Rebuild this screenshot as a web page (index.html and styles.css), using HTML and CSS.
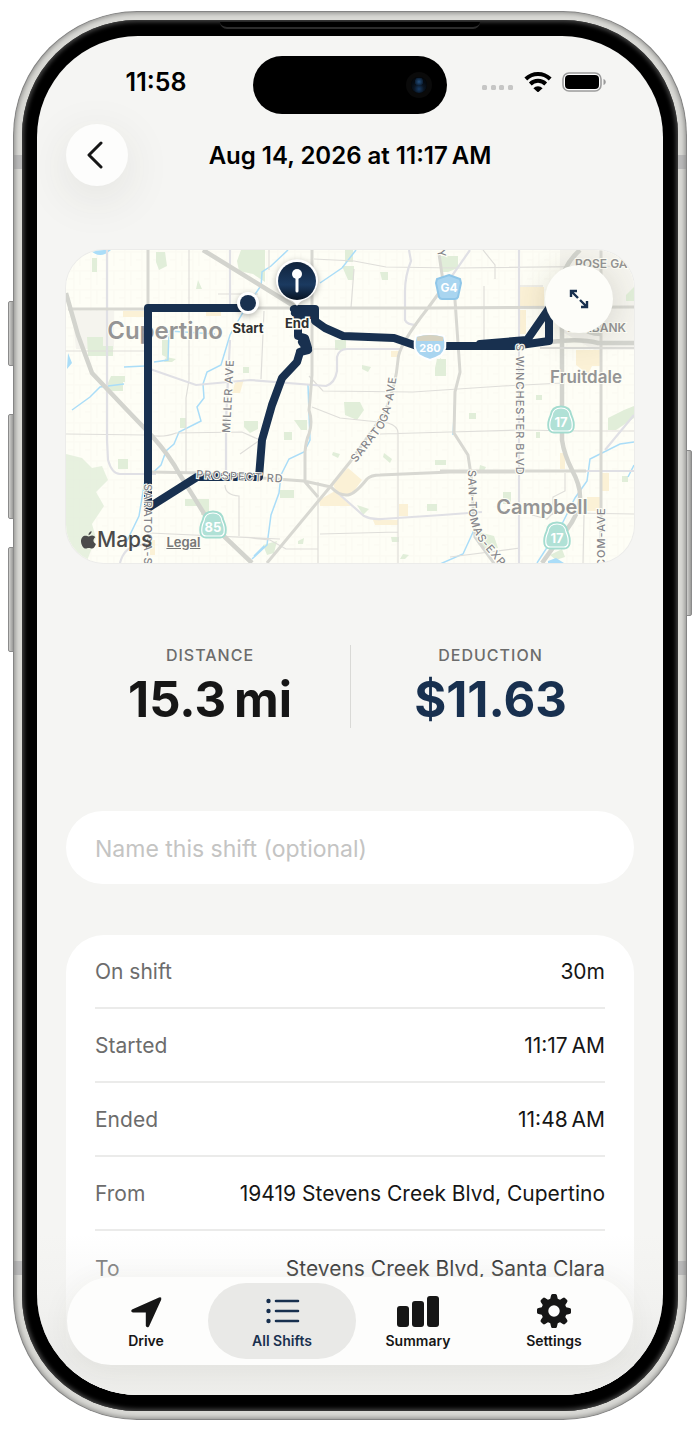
FILE: index.html
```html
<!DOCTYPE html>
<html lang="en">
<head>
  <meta charset="UTF-8">
  <meta name="viewport" content="width=device-width, initial-scale=1">
  <title>Shift details</title>
  <link rel="stylesheet" href="styles.css">
</head>
<body>
  <div class="phone">
    <span class="side-btn action"></span>
    <span class="side-btn vol-up"></span>
    <span class="side-btn vol-down"></span>
    <span class="side-btn power"></span>
    <div class="bezel">
      <div class="screen">

        <div class="status-bar">
          <span class="time">11:58</span>
          <div class="island"><span class="camera"></span></div>
          <div class="status-icons">
            <svg width="32" height="20" viewBox="0 0 32 20" fill="#c6c6c5">
              <rect x="0" y="13" width="5" height="5" rx="1.5"/>
              <rect x="9" y="13" width="5" height="5" rx="1.5"/>
              <rect x="17" y="13" width="5" height="5" rx="1.5"/>
              <rect x="26" y="13" width="5" height="5" rx="1.5"/>
            </svg>
            <svg width="28" height="20" viewBox="0 0 28 20">
              <path d="M1.800 7a17.400 17.400 0 0 1 24.400 0M6.300 12a11 11 0 0 1 15.400 0" fill="none" stroke="#000" stroke-width="4"/>
              <path d="M9.400 16.200a6.600 6.600 0 0 1 9.200 0L14 20.400z"/>
            </svg>
            <svg width="44" height="20" viewBox="0 0 44 20">
              <rect x="1" y="1" width="38" height="18" rx="6" fill="#fff" stroke="#9b9b9b" stroke-width="1.6"/>
              <rect x="3" y="3" width="34" height="14" rx="4"/>
              <path d="M41.500 7c3 1 3 5 0 6z" fill="#9b9b9b"/>
            </svg>
          </div>
        </div>

        <header class="header">
          <button class="back-btn" aria-label="Back">
            <svg width="18" height="28" viewBox="0 0 18 28"><path d="M15 2 3 14l12 12" fill="none" stroke="#161616" stroke-width="3" stroke-linecap="round" stroke-linejoin="round"/></svg>
          </button>
          <h1>Aug 14, 2026 at 11:17&#8239;AM</h1>
        </header>

        <main class="content">
          <section class="map" aria-label="Route map">
            <svg class="map-canvas" viewBox="66 250 568 313">
              <defs>
                <pattern id="streets" width="17" height="19" patternUnits="userSpaceOnUse">
                  <path d="M0 5h17M6 0v19M12 5v14M0 13h6" stroke="#faf9f1" fill="none"/>
                </pattern>
                <linearGradient id="pin" x2="0" y2="1">
                  <stop offset="0" stop-color="#10233c"/>
                  <stop offset=".6" stop-color="#1b3a60"/>
                  <stop offset="1" stop-color="#081423"/>
                </linearGradient>
                <path id="saratoga" d="M356 463L384 427Q393 410 398 366"/>
                <path id="tomas" d="M468 470L469 512Q471 530 482 545L512 580"/>
                <g id="shield">
                  <path d="M0-13Q9-13 10-4Q13 2 12 8Q11 12 7 12H-7Q-11 12-12 8Q-13 2-10-4Q-9-13 0-13Z" fill="#b0e1d6" stroke="#a3dccf" stroke-width="3"/>
                  <path d="M0-12Q8-12 9-4Q12 2 11 8Q10 11 7 11H-7Q-10 11-11 8Q-12 2-9-4Q-8-12 0-12Z" fill="#b0e1d6" stroke="#fff" stroke-width="1.2"/>
                </g>
              </defs>
              <rect x="66" y="250" width="568" height="313" fill="#fefef6"/>
              <rect x="66" y="250" width="568" height="313" fill="url(#streets)"/>

              <!-- built up areas -->
              <path d="M72 311h42v38H76zM560 250h74v100h-40l-35-20z" fill="#f5f4ee"/>
              <!-- parks -->
              <g fill="#e1eed9">
                <path d="M66 454l16 4 10 10 10-2 6 14-12 12 8 14-12 18 4 14-10 25H66z" opacity=".8"/>
                <path d="M241 250h24v32l-12-8-14-3-2-10zM87 337h16v9h10v10H88zM111 376h14v6h-2v9h-15v-8zM118 459h10v10h-10zM156 252h9l2 14-8 4-3-8zM198 280l4 9h-6zM92 258h5v14h-5zM162 340h6v18l-6-3zM180 418h6v10h-6zM185 499h24v16h-8v-9h-16zM244 421h14v8l-8 4-6-6zM345 250h8v12h-8zM342 266h12v14h-6zM380 272h8v8h-6zM335 340h11v10h-11zM362 365l9 2-3 5-6-3zM437 359h9v17h-11v-8zM344 402h16l4 8-7 10-12-5zM294 420h13v10h-6zM284 432h8v8h-8zM280 490h14v8h-14zM333 452l7 2-2 4-6-3zM384 453l8 6-2 4-7-6zM357 505l12 4-6 6zM435 460h11v5h-11zM427 504h10v7h-10zM263 545l14-4-3 12-7 2zM391 537h8v5h-7zM298 541l6-3-1 6h-5zM440 256h18v12l-10 4h-8zM469 413h7v6h-7zM536 432h4v6h-4zM503 492h8v12h-8zM480 465l6 2-2 4h-5zM478 532l16 4 4 12-10 2-10-6zM622 476h6v6h-6zM608 418l16-8 10-4v12l-18 12h-8zM626 295l8-8v14h-8zM440 358l6 4v14h-6zM550 555l12-6 3 8-9 3zM536 395h6v5h-6zM166 357l10 2-4 3h-8zM243 367h6v6h-6zM403 554l6 1-4 4h-5z"/>
              </g>
              <!-- shopping areas -->
              <g fill="#fbf1d6">
                <path d="M123 311h21v6h-21zM206 311h15v5h-15zM235 383l9-4-4 14h-8zM332 482l16-14 14 12-10 14-14 2zM319 500l16-9 9 8 7 7h-31zM399 504h9v12h-9zM373 520h25v5h-23zM519 287h25v19h-25zM519 310h7v24h-7zM576 350h24v16h-8l-4 8-12-9zM587 497h15v14h-15zM560 453h5v16h-5zM602 473h7v18h-7zM150 540h5v15h-5zM391 351h8v6h-8z"/>
              </g>
              <!-- water -->
              <g fill="none" stroke="#aaddf8" stroke-width="1.5">
                <path d="M72 410l18-13 10-10 24-3M124 367l21-1M154 362l14-2 1-29 46 3M260 287l-15 22-15 26-9 30-14 7-4 12 1 14-7 9 4 14-22 11-5 12-8 7-5 14-16 15-6 36-14 29M288 250l-17 16-9 6-1 16M356 250l-14 18-22 15M308 385l2 55-6 12-15 7-8 16-2 18-8 22-4 30-15 14M455 400l-2 35M634 442l-14 2-22 11-8 4-3 22-12 17-14 28-24 37M474 530l-11 24-23 10M634 465l-6 12M254 556l10-10"/>
              </g>
              <path d="M90 250q10 10 21 0zM548 561l8-3 8 5h-16zM68 353l4 10-5 6z" fill="#aaddf8"/>

              <!-- minor streets -->
              <g fill="none" stroke="#dfdeda" stroke-width="1.2">
                <path d="M189 250v130l-3 18v75M66 351h82M66 434l80 1q18 3 30-2l66-1 18 8M269 250v20M354 261l-40-2M354 269l-3 39M264 311l-3 68M354 261l32 6 70 1 178-2M309 376l14 15 90 1 90-6 60-3v-75M312 349h26M312 407l28 11 48 5q10 3 10 10v130M380 434l70-2 70-2 60 1h54M318 482v81M320 534l78-2M250 538l20 2 16 9h32M260 440l-20 14M225 485q0 10 14 11v40M150 533l130 6M483 250l12 15v14M484 286v56M565 473v18l-12 6v18M532 515l15 4 6-6M584 515l-1 48M570 513l64 1M450 557l70-9M519 286h24M218 294h40"/>
              </g>
              <g fill="none" stroke="#e0e0e5" stroke-width="2.2">
                <path d="M107 250v190l1 20q4 14 12 14h36M230 250v60M230 340l-4 80v50M150 369l46 16 54-5 76 6q9-3 11-15v-14q2-8 10-8h55M409 250l2 11q-6 15-6 30v29q2 5 12 5M440 293l30-43M519 250v313M331 487l33 29q8 4 18 3l60-4 40-3M605 450l29-35M520 471h114M120 563q4-15 16-17l14-3"/>
              </g>
              <!-- main roads -->
              <g fill="none" stroke="#d8d8d2" stroke-width="3">
                <path d="M68 309h80M250 308h180l204-1M148 250v60M150 472l54 1 58 5 42 3 27 6M312 250v125q-2 26-3 35 4 12 0 24-3 6-4 18v30l13 15M267 563l63-76 20-25 35-50q11-27 13-52 0-14 30-52l16-22M331 487q8 9 17 8 7-1 19-16 4-4 13-4l70-3h70M455 300l5 72-5 20-1 41 14 22 3 20 4 62 26 36M601 250v300"/>
              </g>
              <path d="M520 471h66M440 471h80M439 254l5 34" fill="none" stroke="#d8d8d2" stroke-width="3"/>
              <!-- highways -->
              <g fill="none" stroke="#d3d4ce" stroke-width="4.500">
                <path d="M66 293l12 42 14 38 35 37 25 26q18 20 28 39l30 48 42 40M203 250l94 58M580 250q-18 16-18 34v156q2 14 10 30 11 20 7 35-3 15-19 33l-18 25M550 342q30-4 48 1h36M565 300q10 34 36 34"/>
              </g>
              <path d="M540 348h94" stroke="#dcdcd8" stroke-width="2"/>

              <!-- place names -->
              <g class="place">
                <text x="165" y="339" font-size="24" text-anchor="middle">Cupertino</text>
                <text x="586" y="383" font-size="17" text-anchor="middle">Fruitdale</text>
                <text x="542" y="514" font-size="20" text-anchor="middle">Campbell</text>
                <text x="575" y="268" font-size="12">ROSE GA</text>
                <text x="626" y="332" font-size="12" text-anchor="end">BURBANK</text>
              </g>

              <!-- driven route -->
              <path class="route" d="M248 308H148V508L197 477H259L262 440 272 405 282 378 297 362 300 352 308 348 305 338 298 336V312L294 309H315V321L325 328 343 336 394 338 417 346 480 346 513 346 549 341V311M527 340L552 304M480 344L527 340M297 318L310 315M295 313L304 320M302 342L308 350 300 352"/>
              <g class="street">
                <text x="196" y="478" transform="rotate(3 196 478)">PROSPECT RD</text>
                <text transform="translate(230 433) rotate(-87)">MILLER AVE</text>
                <text transform="translate(516 344) rotate(90)">S WINCHESTER BLVD</text>
                <text transform="translate(144 484) rotate(90)">SARATOGA-S</text>
                <text transform="translate(605 567) rotate(-90)">COM-AVE</text>
                <text transform="translate(437 250) rotate(80)">Y</text>
                <text><textPath href="#saratoga">SARATOGA-AVE</textPath></text>
                <text><textPath href="#tomas">SAN-TOMAS-EXP</textPath></text>
              </g>

              <!-- road shields -->
              <g class="shield-text">
                <use href="#shield" x="213" y="525"/><text x="213" y="532">85</text>
                <use href="#shield" x="561" y="420"/><text x="561" y="427">17</text>
                <use href="#shield" x="557" y="536"/><text x="557" y="543">17</text>
                <path d="M449 275l11 4 1 4-3 14q-1 2-3 2h-13q-2 0-3-2l-3-14 1-4z" fill="#a9d5f0" stroke="#8fc6e8" stroke-width="2"/>
                <text x="449" y="292" font-size="12">G4</text>
                <path d="M416 336q14-4 28 0 4 13-3 19-5 3-11 5-6-2-11-5-7-6-3-19z" fill="#a9d5f0" stroke="#fff" stroke-width="2"/>
                <path d="M417 337q13-4 26 0v4h-26z" fill="#d6d2c0"/>
                <text class="interstate" x="430" y="352">280</text>
              </g>

              <!-- start and end markers -->
              <circle class="marker" cx="248" cy="303" r="11" fill="#fff"/>
              <circle cx="248" cy="303" r="8" fill="#18304f"/>
              <path class="marker" d="M297 306q-3-5-7-6a21 21 0 1 1 14 0q-4 1-7 6z" fill="#fff"/>
              <circle cx="297" cy="281" r="19" fill="url(#pin)"/>
              <circle cx="297" cy="274" r="5" fill="#fff"/>
              <path d="M297 278v13" stroke="#fff" stroke-width="3" stroke-linecap="round"/>
              <g class="marker-text">
                <text x="248" y="333">Start</text>
                <text x="297" y="328">End</text>
              </g>
            </svg>
            <button class="expand-btn" aria-label="Expand map">
              <svg width="20" height="20" viewBox="0 0 20 20" fill="none" stroke="#18304f" stroke-width="2.400"><path d="M2 8V2h6M2 2l7 7M18 12v6h-6M18 18l-7-7"/></svg>
            </button>
            <div class="attribution">
              <span class="brand">
                <svg width="15" height="18" viewBox="0 0 15 18" fill="#4b4b4b"><path d="M10.500 0q.3 3-3 4.300Q7.400 1.200 10.500 0zM7.600 5.400c1.300 0 2-.9 3.600-.8 1.300.1 2.400.6 3.100 1.700-2.800 1.900-2.200 5.500.6 6.600-.8 2.200-2.200 4.700-3.900 4.700-1.200 0-1.700-.7-3.200-.7s-2 .7-3.100.7C2.300 17.600 0 13.500 0 10.200 0 6.700 2.100 4.700 4.400 4.700c1.300 0 2.300.7 3.200.7z"/></svg>Maps</span>
              <a href="#">Legal</a>
            </div>
          </section>

          <section class="stats">
            <div class="stat">
              <span class="stat-label">DISTANCE</span>
              <span class="stat-value">15.3&#8239;mi</span>
            </div>
            <div class="stat deduction">
              <span class="stat-label">DEDUCTION</span>
              <span class="stat-value">$11.63</span>
            </div>
          </section>

          <input class="name-input" type="text" aria-label="Shift name" placeholder="Name this shift (optional)">

          <dl class="details">
            <div class="row"><dt>On shift</dt><dd>30m</dd></div>
            <div class="row"><dt>Started</dt><dd>11:17&#8239;AM</dd></div>
            <div class="row"><dt>Ended</dt><dd>11:48&#8239;AM</dd></div>
            <div class="row"><dt>From</dt><dd>19419 Stevens Creek Blvd, Cupertino</dd></div>
            <div class="row"><dt>To</dt><dd>Stevens Creek Blvd, Santa Clara</dd></div>
          </dl>
        </main>

        <div class="fade"></div>
        <nav class="tab-bar">
          <a class="tab" href="#">
            <svg width="36" height="36" viewBox="0 0 36 36"><path d="M4 16.500 31 4.500q3-.8 2.200 2.200L21 33.500q-2 2-3.200-.7V19.600H5q-3-1-1-3.100z"/></svg>
            Drive
          </a>
          <a class="tab active" href="#">
            <svg width="36" height="36" viewBox="0 0 36 36"><path d="M12 8h22M12 18h22M12 28h22" stroke="currentColor" stroke-width="2.600" stroke-linecap="round"/><circle cx="4.500" cy="8" r="2.200"/><circle cx="4.500" cy="18" r="2.200"/><circle cx="4.500" cy="28" r="2.200"/></svg>
            All Shifts
          </a>
          <a class="tab" href="#">
            <svg width="42" height="36" viewBox="0 0 42 36"><rect x="0" y="13" width="12" height="21" rx="3"/><rect x="15" y="8" width="12" height="26" rx="3"/><rect x="30" y="3" width="12" height="31" rx="3"/></svg>
            Summary
          </a>
          <a class="tab" href="#">
            <svg width="36" height="36" viewBox="0 0 36 36">
              <defs><path id="tooth" d="M14 7l1-4.500Q15.300 1 16.500 1h3q1.200 0 1.500 1.500L22 7z"/></defs>
              <circle cx="18" cy="18" r="9.200" fill="none" stroke="currentColor" stroke-width="7"/>
              <use href="#tooth"/>
              <use href="#tooth" transform="rotate(45 18 18)"/>
              <use href="#tooth" transform="rotate(90 18 18)"/>
              <use href="#tooth" transform="rotate(135 18 18)"/>
              <use href="#tooth" transform="rotate(180 18 18)"/>
              <use href="#tooth" transform="rotate(225 18 18)"/>
              <use href="#tooth" transform="rotate(270 18 18)"/>
              <use href="#tooth" transform="rotate(315 18 18)"/>
            </svg>
            Settings
          </a>
        </nav>
      </div>
    </div>
  </div>
</body>
</html>
```
FILE: styles.css
```css
* {
  box-sizing: border-box;
}
body {
  margin: 0;
  padding: 11px 13px;
  height: 100vh;
  background: #fff;
  color: #161616;
  font-family: Inter, "Liberation Sans", sans-serif;
}
.phone {
  position: relative;
  height: 100%;
  padding: 9px;
  border-radius: 124px;
  background:
    linear-gradient(transparent 144px, #bababa 144px, #bababa 158px, transparent 158px, transparent calc(100% - 159px), #bababa calc(100% - 159px), #bababa calc(100% - 145px), transparent calc(100% - 145px)),
    #d9d9d5;
  box-shadow: inset 0 0 0 1px #858585, inset 0 0 5px 2px #8a8a88;
}
.side-btn {
  position: absolute;
  left: -5px;
  width: 6px;
  border: 1px solid #8b8b8b;
  border-radius: 2px 0 0 2px;
  background: linear-gradient(to right, #d0d0ce, #9b9b99);
}
.side-btn.action {
  top: 290px;
  height: 65px;
}
.side-btn.vol-up {
  top: 403px;
  height: 105px;
}
.side-btn.vol-down {
  top: 536px;
  height: 105px;
}
.side-btn.power {
  left: auto;
  right: -5px;
  top: 439px;
  height: 166px;
  border-radius: 0 2px 2px 0;
}
.bezel {
  position: relative;
  height: 100%;
  padding: 16px 15px;
  border-radius: 115px;
  background: #000;
  box-shadow: inset 0 0 4px 2px #444;
}
.bezel::before {
  content: "";
  position: absolute;
  top: 2px;
  left: 50%;
  width: 260px;
  height: 5px;
  margin-left: -130px;
  border-radius: 0 0 8px 8px;
  background: #000;
  border-bottom: 2px solid #2c2c2c;
}
.screen {
  position: relative;
  height: 100%;
  overflow: hidden;
  border-radius: 101px;
  background: #f5f5f3;
}

/* status bar */
.status-bar {
  display: grid;
  grid-template-columns: 1fr 194px 1fr;
  align-items: center;
  padding: 20px 22px 0;
}
.time {
  text-align: center;
  font-size: 25px;
  line-height: 30px;
  font-weight: 600;
  color: #000;
  margin-bottom: 6px;
}
.island {
  display: flex;
  align-items: center;
  justify-content: flex-end;
  height: 58px;
  padding-right: 20px;
  border-radius: 29px;
  background: #000;
}
.camera {
  width: 16px;
  height: 16px;
  border-radius: 50%;
  background: radial-gradient(circle at 50% 30%, #24507e 0, #0b1c30 30%, transparent 31%), radial-gradient(circle at 50% 75%, #163b66 0, #0a1420 35%, #050a10 60%);
  box-shadow: 0 0 0 5px #0a0a0a;
}
.status-icons {
  display: flex;
  align-items: center;
  justify-content: center;
  gap: 10px;
  margin-bottom: 6px;
}

/* title row */
.header {
  display: grid;
  grid-template-columns: 62px 1fr 62px;
  align-items: center;
  padding: 10px 29px 0;
}
.header h1 {
  margin: 0;
  padding-top: 2px;
  text-align: center;
  font-size: 24px;
  line-height: 30px;
  font-weight: 600;
  color: #000;
}
.back-btn,
.expand-btn {
  display: flex;
  align-items: center;
  justify-content: center;
  padding: 0;
  border: none;
  border-radius: 50%;
  background: #fdfdfc;
  cursor: pointer;
}
.back-btn {
  width: 62px;
  height: 62px;
  padding-right: 4px;
  box-shadow: 0 12px 48px rgba(60, 60, 40, 0.1);
}

.content {
  display: flex;
  flex-direction: column;
  padding: 64px 29px 0;
}

/* map */
.map {
  position: relative;
  overflow: hidden;
  border-radius: 38px;
  box-shadow: 0 0 0 1px #ececea;
}
.map-canvas {
  display: block;
  width: 100%;
}
.route {
  fill: none;
  stroke: #18304f;
  stroke-width: 8;
  stroke-linecap: round;
  stroke-linejoin: round;
}
.place {
  fill: #959595;
  font-weight: 600;
  stroke: #fefef6;
  stroke-width: 2px;
  paint-order: stroke;
}
.street {
  fill: #85858a;
  font-size: 11px;
  font-weight: 500;
  letter-spacing: 1px;
  stroke: #fefef6;
  stroke-width: 2px;
  paint-order: stroke;
}
.shield-text {
  fill: #fff;
  font-size: 13px;
  font-weight: 700;
  text-anchor: middle;
}
.interstate {
  font-size: 11px;
}
.marker {
  filter: drop-shadow(0 2px 3px rgba(0, 0, 0, 0.3));
}
.marker-text {
  fill: #303030;
  font-size: 13px;
  font-weight: 700;
  text-anchor: middle;
  stroke: #fefef6;
  stroke-width: 3px;
  paint-order: stroke;
}
.expand-btn {
  position: absolute;
  top: 15px;
  right: 21px;
  width: 68px;
  height: 68px;
  background: #fdfdf9;
  box-shadow: 0 4px 32px rgba(60, 60, 40, 0.18);
}
.attribution {
  position: absolute;
  left: 15px;
  bottom: 8px;
  display: flex;
  align-items: center;
  gap: 14px;
  color: #4b4b4b;
}
.brand {
  display: flex;
  align-items: center;
  gap: 1px;
  font-size: 21px;
  line-height: 30px;
  font-weight: 500;
}
.attribution a {
  margin-top: 4px;
  font-size: 13px;
  font-weight: 600;
  color: #777;
}

/* distance and deduction */
.stats {
  display: grid;
  grid-template-columns: 1fr 1fr;
  margin-top: 82px;
  padding: 0 4px;
}
.stat {
  display: flex;
  flex-direction: column;
  align-items: center;
  height: 83px;
}
.stat + .stat {
  border-left: 1px solid #d9d9d6;
}
.stat-label {
  font-size: 16px;
  line-height: 20px;
  font-weight: 500;
  letter-spacing: 1px;
  color: #6c6c6c;
}
.stat-value {
  margin-top: 5px;
  font-size: 49px;
  line-height: 60px;
  font-weight: 700;
}
.deduction .stat-value {
  color: #18304f;
}

.name-input {
  width: 100%;
  height: 73px;
  margin-top: 83px;
  padding: 2px 29px 0;
  border: none;
  border-radius: 37px;
  background: #fff;
  font: inherit;
  font-size: 23px;
}
.name-input::placeholder {
  color: #c4c4c3;
  opacity: 1;
}

/* shift details */
.details {
  margin: 51px 0 0;
  padding: 0 29px 180px;
  border-radius: 38px;
  background: #fff;
}
.row {
  display: flex;
  align-items: center;
  justify-content: space-between;
  height: 74px;
  padding-top: 2px;
  border-bottom: 2px solid #ebebea;
  font-size: 21px;
  line-height: 28px;
}
.row:last-child {
  border-bottom: none;
}
.row dt {
  color: #6c6c6c;
}
.row dd {
  margin: 0;
}

/* bottom navigation */
.fade {
  position: absolute;
  left: 0;
  right: 0;
  bottom: 0;
  height: 160px;
  background: linear-gradient(rgba(240, 240, 238, 0), rgba(238, 238, 236, 0.5) 45%, #ebebe9 75%, #eeeeeb);
  pointer-events: none;
}
.tab-bar {
  position: absolute;
  left: 30px;
  right: 30px;
  bottom: 30px;
  display: grid;
  grid-template-columns: repeat(4, 1fr);
  padding: 6px 11px;
  border-radius: 44px;
  background: #fdfdfc;
  box-shadow: 0 4px 30px rgba(60, 60, 40, 0.06);
}
.tab {
  display: flex;
  flex-direction: column;
  align-items: center;
  gap: 4px;
  margin: 0 -6px;
  padding: 10px 0;
  border-radius: 38px;
  color: #161616;
  font-size: 14px;
  line-height: 16px;
  font-weight: 600;
  text-decoration: none;
}
.tab svg {
  fill: currentColor;
}
.tab.active {
  background: #e9e9e7;
  color: #18304f;
}
```
